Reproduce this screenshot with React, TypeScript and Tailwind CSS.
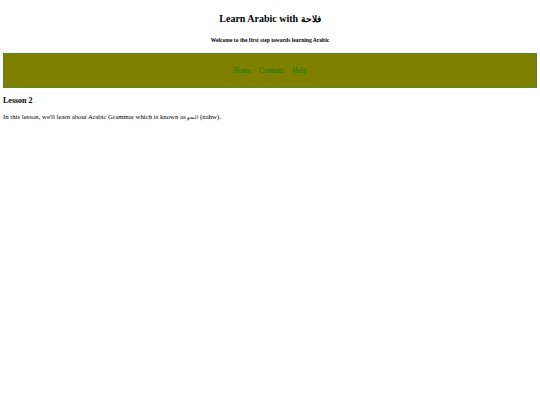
export default function App() {
  return (
    <div className="min-h-[405px] bg-white text-black font-['Liberation_Serif',serif] px-[3px]">
      <h1 className="pt-[11px] text-center text-[10px] font-bold leading-[16px]">
        <span>Learn Arabic with </span>
        <span lang="ar" className="font-['Noto_Sans_CJK_SC',serif] text-[9px]">فلاحة</span>
      </h1>
      <h5 className="mt-[9px] text-center text-[5.6px] font-bold leading-[8px]">Welcome to the first step towards learning Arabic</h5>
      <nav className="mt-[9px] h-[35px] pt-[2px] bg-[#808000] border border-[#4f8a2a] flex items-center justify-center gap-[8px] text-[7.2px] text-[#008000]">
        <span>Home</span><span>Contents</span><span>Help</span>
      </nav>
      <h3 className="mt-[8px] text-[8px] font-bold leading-[10px]">Lesson 2</h3>
      <p className="mt-[6px] text-[6.75px] leading-[10px]">In this lesson, we'll learn about Arabic Grammar which is known as <span lang="ar" className="text-[5px]">النحو</span> (nahw).</p>
    </div>
  );
}
